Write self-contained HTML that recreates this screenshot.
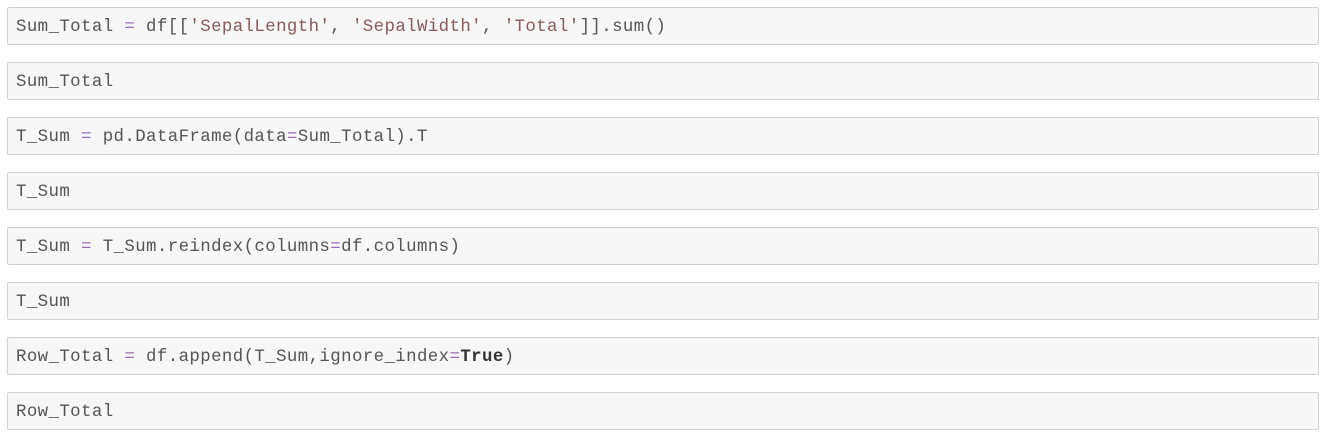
<!DOCTYPE html>
<html><head><style>
body{margin:0;background:#fff;width:1324px;height:439px;overflow:hidden}
.c{position:absolute;left:7px;width:1310px;height:36px;background:#f7f7f7;border:1px solid #d2d2d2;border-radius:2px;box-sizing:content-box}
.c pre{margin:0;position:absolute;left:8px;top:10px;font-family:"Liberation Mono",monospace;font-size:17.4px;line-height:20px;color:#555;letter-spacing:0.4px}
.o{color:#9a6bb5}.s{color:#8a5a5a}.k{color:#333;font-weight:bold}
</style></head><body>
<div class="c" style="top:7px"><pre>Sum_Total <span class="o">=</span> df[[<span class="s">'SepalLength'</span>, <span class="s">'SepalWidth'</span>, <span class="s">'Total'</span>]].sum()</pre></div>
<div class="c" style="top:62px"><pre>Sum_Total</pre></div>
<div class="c" style="top:117px"><pre>T_Sum <span class="o">=</span> pd.DataFrame(data<span class="o">=</span>Sum_Total).T</pre></div>
<div class="c" style="top:172px"><pre>T_Sum</pre></div>
<div class="c" style="top:227px"><pre>T_Sum <span class="o">=</span> T_Sum.reindex(columns<span class="o">=</span>df.columns)</pre></div>
<div class="c" style="top:282px"><pre>T_Sum</pre></div>
<div class="c" style="top:337px"><pre>Row_Total <span class="o">=</span> df.append(T_Sum,ignore_index<span class="o">=</span><span class="k">True</span>)</pre></div>
<div class="c" style="top:392px"><pre>Row_Total</pre></div>
</body></html>
